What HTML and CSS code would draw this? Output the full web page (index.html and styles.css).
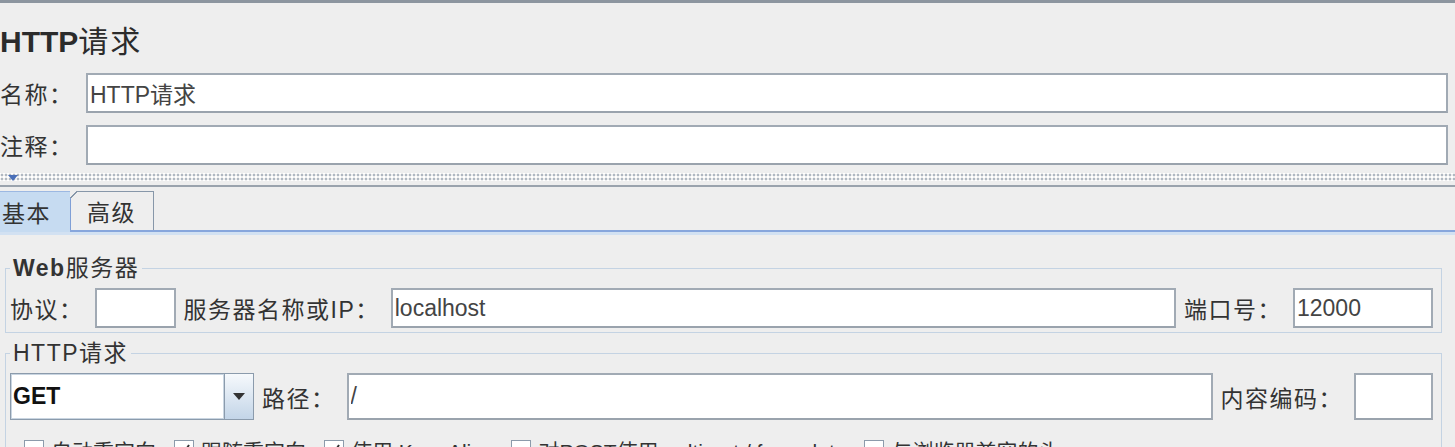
FILE: index.html
```html
<!DOCTYPE html>
<html lang="zh-CN">

<head>
    <meta charset="UTF-8">
    <meta name="viewport" content="width=device-width, initial-scale=1.0">
    <title>HTTP请求</title>
    <link rel="stylesheet" href="styles.css">
</head>

<body>
    <div class="panel">
        <h1 class="title">HTTP<span class="cjk">请求</span></h1>

        <div class="field-row">
            <label class="field-label" for="name">名称：</label>
            <input class="text-input" type="text" id="name" value="HTTP请求">
        </div>
        <div class="field-row field-row-last">
            <label class="field-label" for="comment">注释：</label>
            <input class="text-input" type="text" id="comment">
        </div>

        <!-- 分隔条 -->
        <div class="splitter"><span class="splitter-arrow"></span></div>

        <div class="tabs">
            <div class="tab tab-active">基本</div>
            <div class="tab">高级</div>
        </div>
        <div class="tabs-bottom"></div>

        <!-- Web服务器 -->
        <fieldset class="group">
            <legend class="group-title"><b>Web</b>服务器</legend>
            <div class="group-row">
                <label class="row-label" for="protocol">协议：</label>
                <input class="text-input input-protocol" type="text" id="protocol">
                <label class="row-label" for="host">服务器名称或IP：</label>
                <input class="text-input input-grow" type="text" id="host" value="localhost">
                <label class="row-label" for="port">端口号：</label>
                <input class="text-input input-port" type="text" id="port" value="12000">
            </div>
        </fieldset>

        <!-- HTTP请求 -->
        <fieldset class="group group-request">
            <legend class="group-title">HTTP请求</legend>
            <div class="group-row row-tall">
                <div class="method-select">
                    <span class="method-value">GET</span>
                    <span class="method-arrow"><span class="arrow-down"></span></span>
                </div>
                <label class="row-label" for="path">路径：</label>
                <input class="text-input input-grow" type="text" id="path" value="/">
                <label class="row-label" for="encoding">内容编码：</label>
                <input class="text-input input-encoding" type="text" id="encoding">
            </div>

            <div class="check-row">
                <span class="check-item"><span class="check-box"></span>自动重定向</span>
                <span class="check-item"><span class="check-box"><svg width="18" height="18" viewBox="0 0 18 18"><polyline points="4,9 8,13 14,4" fill="none" stroke="#333" stroke-width="2"/></svg></span>跟随重定向</span>
                <span class="check-item"><span class="check-box"><svg width="18" height="18" viewBox="0 0 18 18"><polyline points="4,9 8,13 14,4" fill="none" stroke="#333" stroke-width="2"/></svg></span>使用 KeepAlive</span>
                <span class="check-item"><span class="check-box"></span>对POST使用multipart / form-data</span>
                <span class="check-item"><span class="check-box"></span>与浏览器兼容的头</span>
            </div>
        </fieldset>
    </div>
</body>

</html>
```

FILE: styles.css
```css
body {
    font-family: 'Liberation Sans', 'Noto Sans CJK SC', sans-serif;
    font-size: 23px;
    color: #333;
    background-color: #eeeeee;
    margin: 0;
    padding: 0;
    overflow: hidden;
}

.panel {
    border-top: 3px solid #8c959f;
}

.title {
    font-size: 30px;
    line-height: 36px;
    font-weight: bold;
    color: #2b2b2b;
    margin: 21px 0 13px 0;
}

.title .cjk {
    font-weight: normal;
    letter-spacing: 2px;
}

.field-row {
    display: flex;
    align-items: center;
    height: 40px;
    margin-bottom: 12px;
    padding-right: 7px;
}

.field-row-last {
    margin-bottom: 8px;
}

.field-label {
    width: 86px;
    flex-shrink: 0;
    letter-spacing: 1.5px;
}

.text-input {
    font: inherit;
    color: #444;
    background-color: #fff;
    border: 2px solid #a1aab4;
    border-bottom-color: #9aa3ad;
    padding: 0 2px;
    margin: 0;
    height: 100%;
    box-sizing: border-box;
    outline: none;
}

.field-row .text-input {
    flex: 1;
}

/* 分隔条 */
.splitter {
    position: relative;
    height: 8px;
    padding-bottom: 4px;
    border-bottom: 2px solid #9aa3ad;
    background-image: radial-gradient(circle, #b0b8c2 0.9px, transparent 1.2px),
        radial-gradient(circle, #ffffff 0.9px, transparent 1.2px);
    background-size: 4px 4px, 4px 4px;
    background-position: 0 0, 2px 2px;
    background-clip: content-box;
    background-origin: content-box;
}

.splitter-arrow {
    position: absolute;
    left: 8px;
    top: 2px;
    width: 0;
    height: 0;
    border-left: 5px solid transparent;
    border-right: 5px solid transparent;
    border-top: 6px solid #4a6fb8;
}

/* 標籤 */
.tabs {
    display: flex;
    height: 39px;
    margin-top: 4px;
    border-bottom: 2px solid #87a6dc;
}

.tab {
    position: relative;
    display: flex;
    align-items: center;
    padding: 0 17px 0 16px;
    letter-spacing: 1.5px;
    border: 1px solid #8797a9;
    border-bottom: none;
    box-sizing: border-box;
}

.tab::before {
    content: "";
    position: absolute;
    left: -1px;
    top: -1px;
    width: 7px;
    height: 7px;
    background: linear-gradient(135deg, #eeeeee 0 44%, #8797a9 44% 58%, transparent 58%);
}

.tab-active {
    width: 70px;
    padding: 0 0 0 2px;
    background-color: #c6dbf1;
    border: none;
    border-top: 1px solid #9cb8e2;
    margin-bottom: -2px;
}

.tab-active::before {
    display: none;
}

.tab-active + .tab {
    border-left: 1px solid #7f9fd6;
}

.tabs-bottom {
    height: 3px;
    background-color: #d2e1f2;
}

/* 群組框 */
.group {
    border: 1px solid #c4d3e3;
    margin: 20px 13px 0 5px;
    padding: 7px 8px 4px 4px;
    min-width: 0;
}

.group-request {
    margin-top: 7px;
}

.group-title {
    padding: 0 3px;
    line-height: 26px;
    letter-spacing: 1.5px;
    color: #333;
}

.group-row {
    display: flex;
    align-items: center;
    gap: 8px;
    height: 40px;
}

.row-tall {
    height: 47px;
}

.row-label {
    padding-right: 3px;
    letter-spacing: 1.5px;
    white-space: nowrap;
}

.input-protocol {
    width: 81px;
}

.input-grow {
    flex: 1;
    min-width: 0;
}

.input-port {
    width: 140px;
}

.input-encoding {
    width: 79px;
}

/* 下拉選單 */
.method-select {
    display: flex;
    width: 244px;
    height: 100%;
    border: 1px solid #8b9bac;
    box-sizing: border-box;
    flex-shrink: 0;
}

.method-value {
    flex: 1;
    display: flex;
    align-items: center;
    padding-left: 1px;
    font-weight: bold;
    color: #111;
    background-color: #fff;
    border: 1px solid #c9d5e1;
}

.method-arrow {
    width: 28px;
    display: flex;
    align-items: center;
    justify-content: center;
    border-left: 1px solid #8b9bac;
    background: linear-gradient(#f6f9fc, #c3d5e8);
}

.arrow-down {
    width: 0;
    height: 0;
    border-left: 6px solid transparent;
    border-right: 6px solid transparent;
    border-top: 7px solid #333;
}

/* 勾選框 */
.check-row {
    display: flex;
    align-items: center;
    gap: 18px;
    margin-top: 17px;
    padding-left: 14px;
    height: 26px;
    font-size: 21px;
    white-space: nowrap;
}

.check-item {
    display: flex;
    align-items: center;
    gap: 7px;
}

.check-box {
    width: 20px;
    height: 20px;
    box-sizing: border-box;
    background-color: #fff;
    border: 1px solid #8c9bab;
    display: flex;
    align-items: center;
    justify-content: center;
}
```
